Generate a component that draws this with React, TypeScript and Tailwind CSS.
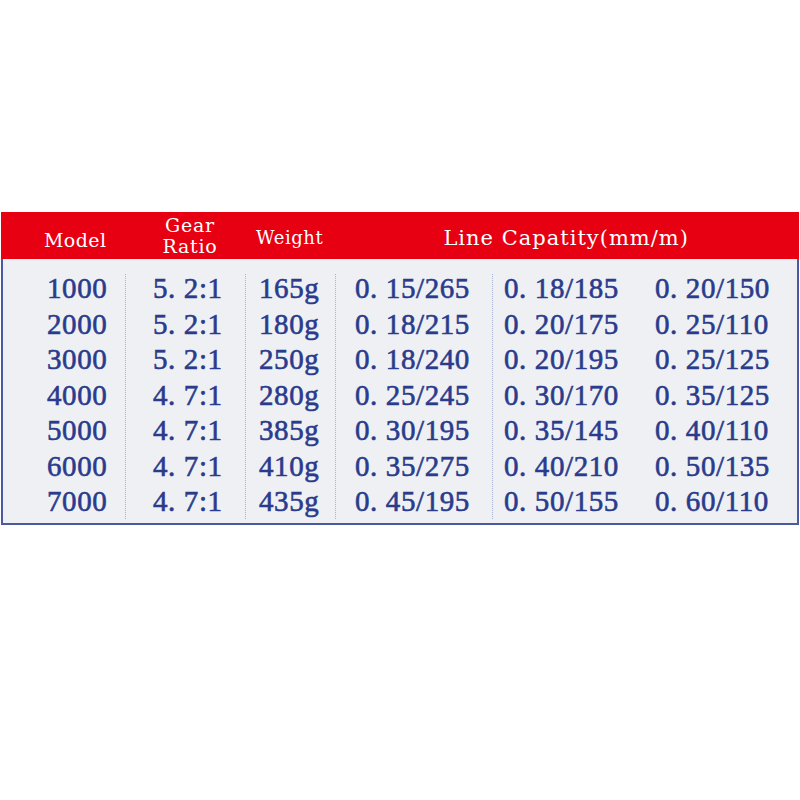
import React from "react";

const models = ["1000", "2000", "3000", "4000", "5000", "6000", "7000"];
const ratios = ["5. 2:1", "5. 2:1", "5. 2:1", "4. 7:1", "4. 7:1", "4. 7:1", "4. 7:1"];
const weights = ["165g", "180g", "250g", "280g", "385g", "410g", "435g"];
const cap1 = ["0. 15/265", "0. 18/215", "0. 18/240", "0. 25/245", "0. 30/195", "0. 35/275", "0. 45/195"];
const cap2 = ["0. 18/185", "0. 20/175", "0. 20/195", "0. 30/170", "0. 35/145", "0. 40/210", "0. 50/155"];
const cap3 = ["0. 20/150", "0. 25/110", "0. 25/125", "0. 35/125", "0. 40/110", "0. 50/135", "0. 60/110"];

const Column: React.FC<{ values: string[]; width: string; pad: string; sep?: boolean }> = ({
  values,
  width,
  pad,
  sep,
}) => (
  <div className={`${width} ${pad} relative flex flex-col`}>
    {sep && (
      <div className="absolute left-0 top-[3px] bottom-[4px] border-l border-dotted border-[#a9b2cc]" />
    )}
    {values.map((v, i) => (
      <div key={i} className="h-[35.5px] leading-[35.5px] whitespace-pre">
        {v}
      </div>
    ))}
  </div>
);

const App: React.FC = () => {
  return (
    <div className="w-[800px] h-[800px] bg-white pt-[212px]">
      <div className="ml-[1px] w-[798px]">
        {/* header */}
        <div
          className="h-[47px] bg-[#e60012] text-white flex items-center"
          style={{ fontFamily: '"DejaVu Serif", "Liberation Serif", serif' }}
        >
          <div className="w-[125px] pl-[43px] pt-[9px] text-[19px] tracking-[0.4px]">Model</div>
          <div className="w-[126px] pl-[2px] flex flex-col items-center text-[19px] leading-[21px] tracking-[0.8px] pt-[1px]">
            <span>Gear</span>
            <span>Ratio</span>
          </div>
          <div className="ml-[4px] text-[18px] tracking-[0.6px] pt-[4px]">Weight</div>
          <div className="ml-[120px] text-[21px] tracking-[1px] pt-[6px]">Line Capatity(mm/m)</div>
        </div>
        {/* body */}
        <div
          className="h-[266px] bg-[#eef0f3] border-2 border-t-0 border-[#4b5a9f] flex pt-[12px] text-[29px] text-[#2a3b8c] tracking-[0.6px] [-webkit-text-stroke:0.6px_#2a3b8c]"
          style={{ fontFamily: '"Liberation Serif", "DejaVu Serif", serif' }}
        >
          <Column values={models} width="w-[122px]" pad="pl-[44px]" />
          <Column values={ratios} width="w-[120px]" pad="pl-[28px]" sep />
          <Column values={weights} width="w-[90px]" pad="pl-[14px]" sep />
          <Column values={cap1} width="w-[157px]" pad="pl-[20px]" sep />
          <Column values={cap2} width="w-[148px]" pad="pl-[12px]" sep />
          <Column values={cap3} width="w-[157px]" pad="pl-[15px]" />
        </div>
      </div>
    </div>
  );
};

export default App;
